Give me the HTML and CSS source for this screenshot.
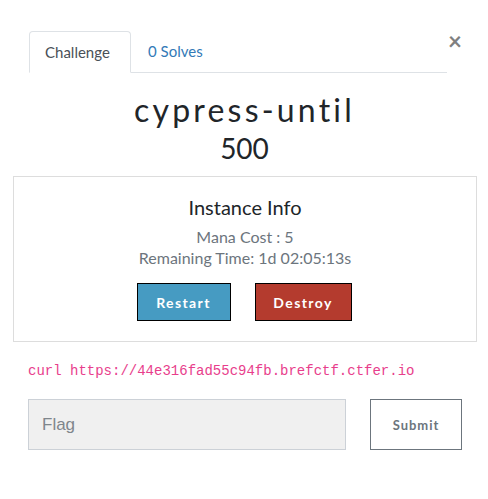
FILE: index.html
```html
<!DOCTYPE html>
<html>
<head>
<meta charset="utf-8">
<link rel="stylesheet" href="styles.css">
</head>
<body>
<div class="modal">
  <div class="top">
    <div class="tabs">
      <div class="tab active">Challenge</div>
      <div class="tab link">0 Solves</div>
    </div>
    <div class="close">&times;</div>
  </div>
  <h2 class="title">cypress-until</h2>
  <h3 class="value">500</h3>
  <div class="instance">
    <h5 class="inst-title">Instance Info</h5>
    <div class="meta">Mana Cost : 5</div>
    <div class="meta">Remaining Time: 1d 02:05:13s</div>
    <div class="actions">
      <button class="btn restart">Restart</button>
      <button class="btn destroy">Destroy</button>
    </div>
  </div>
  <code class="curl">curl https://44e316fad55c94fb.brefctf.ctfer.io</code>
  <div class="submit-row">
    <div class="flag">Flag</div>
    <button class="submit">Submit</button>
  </div>
</div>
</body>
</html>
```
FILE: styles.css
```css
* { box-sizing: border-box; }
body { margin: 0; background: #fff; font-family: "Lato", sans-serif; color: #212529; }
.modal { padding: 31px 12px 0 13px; }
.top { display: flex; align-items: flex-start; padding-left: 16px; }
.tabs { display: flex; width: 418px; border-bottom: 1px solid #dee2e6; height: 42px; }
.tab { font-size: 15px; padding: 0 16px; line-height: 40px; height: 42px; }
.tab.active { border: 1px solid #dee2e6; border-bottom: 1px solid #fff; border-radius: 4px 4px 0 0; color: #495057; width: 102px; padding-left: 15px; margin-bottom: -1px; }
.tab.link { color: #337ab7; padding-left: 17px; }
.close { font-size: 24px; font-weight: 700; color: #808080; margin-left: 1px; line-height: 20px; padding-top: 0; }
.title { margin: 17px 0 0; text-align: center; font-weight: 400; font-size: 32px; letter-spacing: 3.2px; line-height: 40px; color: #212529; }
.value { margin: 1px 0 0; text-align: center; font-weight: 400; font-size: 28px; line-height: 34px; }
.instance { margin-top: 11px; border: 1px solid #ddd; width: 464px; height: 166px; text-align: center; padding-top: 18px; }
.inst-title { margin: 0; font-size: 20px; font-weight: 400; line-height: 24px; }
.meta { color: #6c757d; font-size: 16px; line-height: 21px; }
.inst-title + .meta { margin-top: 7px; }
.actions { display: flex; justify-content: center; gap: 24px; margin-top: 15px; padding-right: 2px; }
.btn { font-family: "Lato", sans-serif; color: #fff; font-weight: 700; font-size: 14px; letter-spacing: 1.4px; border: 1px solid #000; height: 38px; border-radius: 0; }
.restart { background: #469bc2; width: 94px; }
.destroy { background: #b43b2e; width: 97px; }
.curl { display: block; margin: 20px 0 0 15px; font-family: "Liberation Mono", monospace; font-size: 14px; color: #e83e8c; line-height: 18px; }
.submit-row { display: flex; margin: 19px 0 0 15px; gap: 24px; }
.flag { width: 318px; height: 51px; background: #f0f0f0; border: 1px solid #ccd1d7; font-family: "Liberation Sans", sans-serif; font-size: 17px; color: #7f868c; padding: 0 0 0 13px; line-height: 49px; }
.submit { width: 92px; height: 51px; background: #fff; border: 1px solid #6c757d; color: #6c757d; font-family: "Lato", sans-serif; font-weight: 700; font-size: 13px; letter-spacing: 1px; border-radius: 0; }
```
